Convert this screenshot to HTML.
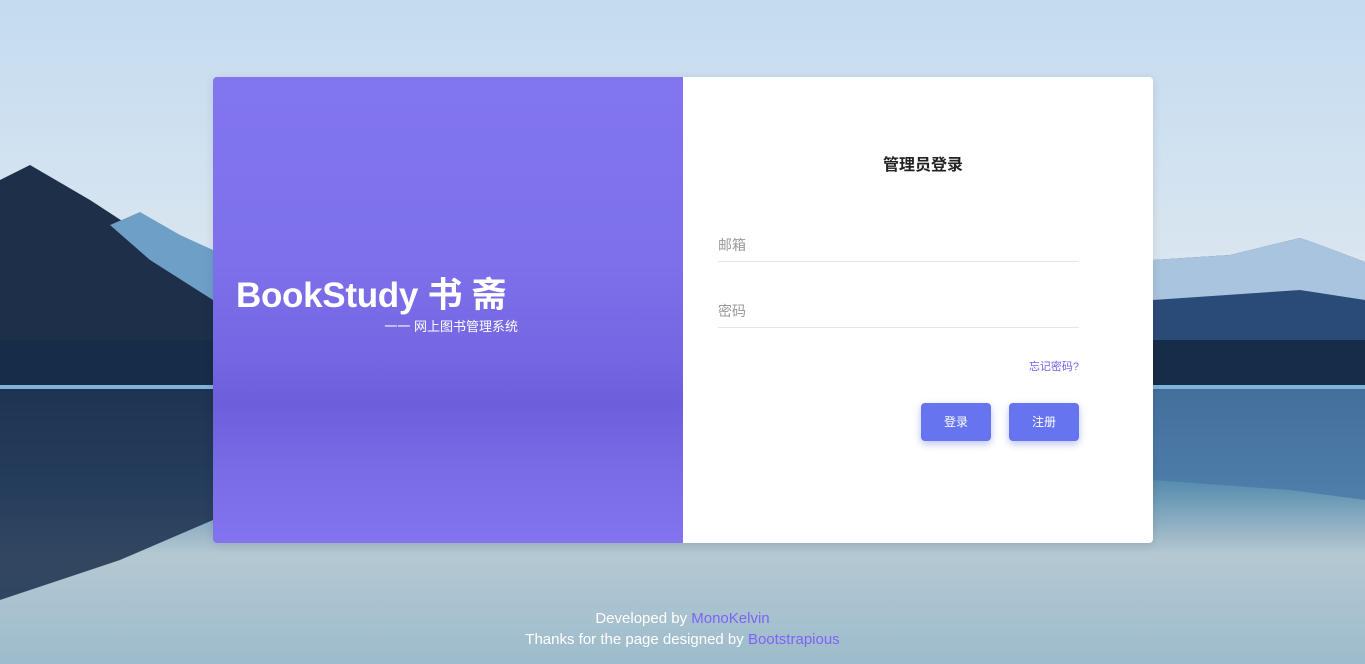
<!DOCTYPE html>
<html><head><meta charset="utf-8"><style>
*{margin:0;padding:0;box-sizing:border-box}
body{width:1365px;height:664px;overflow:hidden;position:relative;font-family:"Liberation Sans","Noto Sans CJK SC",sans-serif;background:#cfe0ef}
svg.bg{position:absolute;left:0;top:0}
.card{position:absolute;left:213px;top:77px;width:940px;height:466px;border-radius:4px;overflow:hidden;box-shadow:0 2px 10px rgba(0,0,0,.1)}
.left{position:absolute;left:0;top:0;width:470px;height:466px;background:linear-gradient(180deg,#8276f0 0%,#7d70ea 40%,#7566e2 60%,#6d5fdb 70%,#7a6be6 85%,#8273ef 100%)}
.right{position:absolute;left:470px;top:0;width:470px;height:466px;background:#fff}
.brand{position:absolute;left:23px;top:190px;color:#fff;font-weight:bold;font-size:35px;letter-spacing:-.3px}
.sub{position:absolute;right:165px;top:239px;color:#fff;font-size:13px}
h2{position:absolute;left:0;width:480px;top:74px;text-align:center;font-size:16px;color:#222;font-weight:bold}
.field{position:absolute;left:35px;width:361px;border-bottom:1px solid #e6e6e6;color:#999;font-size:14px;padding-bottom:6px}
.forgot{position:absolute;right:74px;top:281px;font-size:11px;color:#6f5ee8}
.btn{position:absolute;top:326px;width:70px;height:38px;background:#6674ef;border-radius:4px;color:#fff;font-size:12px;text-align:center;line-height:38px;box-shadow:0 3px 8px rgba(102,116,239,.45)}
.foot{position:absolute;left:0;width:1365px;text-align:center;color:#fff;font-size:15px}
.foot span{color:#7c64f5}
</style></head><body>
<svg class="bg" width="1365" height="664">
<defs>
<linearGradient id="sky" x1="0" y1="0" x2="0" y2="1"><stop offset="0" stop-color="#c4dbf0"/><stop offset="1" stop-color="#e4ebef"/></linearGradient>
<linearGradient id="lake" x1="0" y1="0" x2="0" y2="1"><stop offset="0" stop-color="#2e4c6e"/><stop offset=".35" stop-color="#5c8fb0"/><stop offset=".6" stop-color="#b5c8d2"/><stop offset="1" stop-color="#9dbccc"/></linearGradient>
</defs>
<rect width="1365" height="390" fill="url(#sky)"/>
<polygon points="0,180 30,165 90,200 213,280 213,390 0,390" fill="#1e2f4a"/>
<polygon points="110,225 140,212 180,235 213,250 213,300 150,260" fill="#6e9fc6"/>
<polygon points="1153,260 1230,255 1300,238 1320,245 1365,262 1365,390 1153,390" fill="#2a4a78"/>
<polygon points="1153,260 1230,255 1300,238 1320,245 1365,262 1365,300 1300,290 1153,300" fill="#a9c4de"/>
<rect y="340" width="1365" height="50" fill="#172c48"/>
<rect y="385" width="1365" height="4" fill="#7fb4d6"/>
<rect y="389" width="1365" height="275" fill="url(#lake)"/>
<polygon points="0,389 213,389 213,520 120,560 0,600" fill="#1b2f4c" opacity=".85"/>
<polygon points="1153,389 1365,389 1365,500 1290,490 1153,480" fill="#4a78a8" opacity=".8"/>
</svg>
<div class="card">
<div class="left"><div class="brand">BookStudy 书 斋</div><div class="sub">一一 网上图书管理系统</div></div>
<div class="right">
<h2>管理员登录</h2>
<div class="field" style="top:158px">邮箱</div>
<div class="field" style="top:224px">密码</div>
<div class="forgot">忘记密码?</div>
<div class="btn" style="left:238px">登录</div>
<div class="btn" style="left:326px">注册</div>
</div></div>
<div class="foot" style="top:610px">Developed by <span>MonoKelvin</span></div>
<div class="foot" style="top:631px">Thanks for the page designed by <span>Bootstrapious</span></div>
</body></html>
